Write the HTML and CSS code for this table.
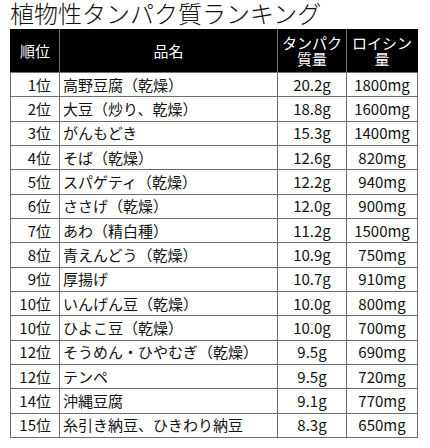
FILE: index.html
```html
<!DOCTYPE html>
<html lang="ja">
<head>
<meta charset="utf-8">
<title>植物性タンパク質ランキング</title>
<link rel="stylesheet" href="styles.css">
</head>
<body>
<div class="page">
  <h1 class="title">植物性タンパク質ランキング</h1>
  <table class="ranking">
    <colgroup>
      <col class="c-rank">
      <col class="c-name">
      <col class="c-protein">
      <col class="c-leucine">
    </colgroup>
    <thead>
      <tr>
        <th>順位</th>
        <th>品名</th>
        <th>タンパク<br>質量</th>
        <th>ロイシン<br>量</th>
      </tr>
    </thead>
    <tbody>
      <tr><td class="rank">1位</td><td class="name">高野豆腐（乾燥）</td><td class="num">20.2g</td><td class="num">1800mg</td></tr>
      <tr><td class="rank">2位</td><td class="name">大豆（炒り、乾燥）</td><td class="num">18.8g</td><td class="num">1600mg</td></tr>
      <tr><td class="rank">3位</td><td class="name">がんもどき</td><td class="num">15.3g</td><td class="num">1400mg</td></tr>
      <tr><td class="rank">4位</td><td class="name">そば（乾燥）</td><td class="num">12.6g</td><td class="num">820mg</td></tr>
      <tr><td class="rank">5位</td><td class="name">スパゲティ（乾燥）</td><td class="num">12.2g</td><td class="num">940mg</td></tr>
      <tr><td class="rank">6位</td><td class="name">ささげ（乾燥）</td><td class="num">12.0g</td><td class="num">900mg</td></tr>
      <tr><td class="rank">7位</td><td class="name">あわ（精白種）</td><td class="num">11.2g</td><td class="num">1500mg</td></tr>
      <tr><td class="rank">8位</td><td class="name">青えんどう（乾燥）</td><td class="num">10.9g</td><td class="num">750mg</td></tr>
      <tr><td class="rank">9位</td><td class="name">厚揚げ</td><td class="num">10.7g</td><td class="num">910mg</td></tr>
      <tr><td class="rank">10位</td><td class="name">いんげん豆（乾燥）</td><td class="num">10.0g</td><td class="num">800mg</td></tr>
      <tr><td class="rank">10位</td><td class="name">ひよこ豆（乾燥）</td><td class="num">10.0g</td><td class="num">700mg</td></tr>
      <tr><td class="rank">12位</td><td class="name">そうめん・ひやむぎ（乾燥）</td><td class="num">9.5g</td><td class="num">690mg</td></tr>
      <tr><td class="rank">12位</td><td class="name">テンペ</td><td class="num">9.5g</td><td class="num">720mg</td></tr>
      <tr><td class="rank">14位</td><td class="name">沖縄豆腐</td><td class="num">9.1g</td><td class="num">770mg</td></tr>
      <tr><td class="rank">15位</td><td class="name">糸引き納豆、ひきわり納豆</td><td class="num">8.3g</td><td class="num">650mg</td></tr>
    </tbody>
  </table>
</div>
</body>
</html>
```

FILE: styles.css
```css
html, body {
  margin: 0;
  padding: 0;
  background: #ffffff;
}

.page {
  padding: 0 0 0 10px;
  font-family: "Noto Sans CJK JP", "Noto Sans", sans-serif;
  color: #111111;
}

.title {
  margin: 0 0 3px 0;
  font-size: 24px;
  line-height: 26px;
  font-weight: 300;
  color: #111111;
  letter-spacing: 0;
}

.ranking {
  border-collapse: collapse;
  table-layout: fixed;
  width: 407px;
  font-size: 15px;
  border: 1px solid #6e6e6e;
}

.c-rank { width: 49px; }
.c-name { width: 218px; }
.c-protein { width: 69px; }
.c-leucine { width: 71px; }

.ranking th {
  background: #000000;
  color: #ffffff;
  font-weight: 400;
  line-height: 16px;
  height: 42px;
  padding: 0;
  text-align: center;
  border: 1px solid #6e6e6e;
  border-top-color: #000000;
}

.ranking th:first-child {
  border-left-color: #000000;
}

.ranking th:last-child {
  border-right-color: #000000;
}

.ranking td {
  height: 23.33px;
  padding: 0;
  line-height: 20px;
  border: 1px solid #6e6e6e;
  white-space: nowrap;
}

.rank {
  text-align: right;
  padding-right: 8px !important;
}

.name {
  text-align: left;
  padding-left: 3px !important;
}

.num {
  text-align: center;
}
```
